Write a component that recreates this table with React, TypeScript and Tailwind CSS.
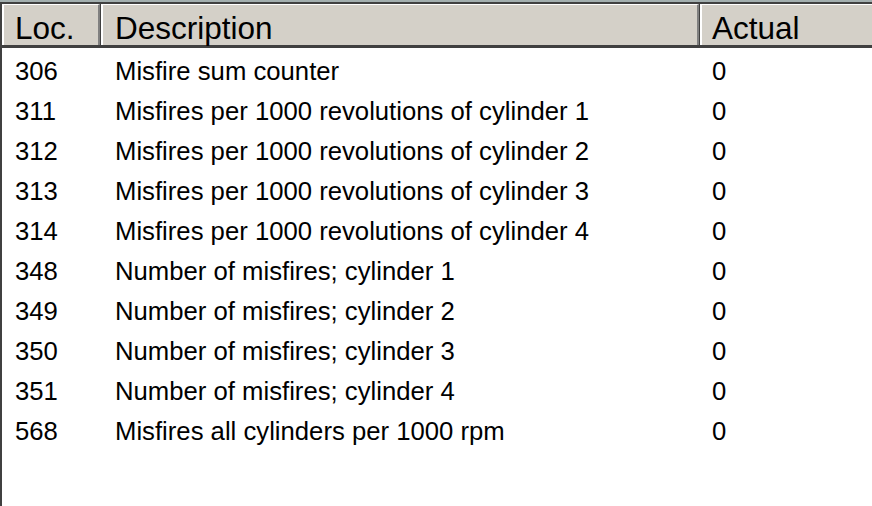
import React from 'react';

const rows = [
  { loc: '306', desc: 'Misfire sum counter', actual: '0' },
  { loc: '311', desc: 'Misfires per 1000 revolutions of cylinder 1', actual: '0' },
  { loc: '312', desc: 'Misfires per 1000 revolutions of cylinder 2', actual: '0' },
  { loc: '313', desc: 'Misfires per 1000 revolutions of cylinder 3', actual: '0' },
  { loc: '314', desc: 'Misfires per 1000 revolutions of cylinder 4', actual: '0' },
  { loc: '348', desc: 'Number of misfires; cylinder 1', actual: '0' },
  { loc: '349', desc: 'Number of misfires; cylinder 2', actual: '0' },
  { loc: '350', desc: 'Number of misfires; cylinder 3', actual: '0' },
  { loc: '351', desc: 'Number of misfires; cylinder 4', actual: '0' },
  { loc: '568', desc: 'Misfires all cylinders per 1000 rpm', actual: '0' },
];

const HeaderCell: React.FC<{ label: string; className: string; pad: string }> = ({ label, className, pad }) => (
  <div className={`${className} h-full border-r border-[#404040]`}>
    <div className={`h-full border-t border-l-2 border-r-2 border-t-white border-l-white border-r-[#808080] flex items-center ${pad}`}>
      {label}
    </div>
  </div>
);

export default function App() {
  return (
    <div className="w-[872px] h-[506px] overflow-hidden bg-[#a3afaf] pt-[2px]" style={{ fontFamily: '"Liberation Sans", Arial, sans-serif' }}>
      <div className="h-full bg-white border-t-2 border-l-2 border-[#404040]">
        {/* Header */}
        <div className="flex h-[44px] bg-[#d4d0c8] text-[31.5px] text-black border-b-[3px] border-b-[#404040] leading-none">
          <HeaderCell label="Loc." className="w-[99px] shrink-0" pad="pl-[11px] pt-[7px]" />
          <HeaderCell label="Description" className="w-[599px] shrink-0" pad="pl-[12px] pt-[7px]" />
          <div className="flex-1 h-full border-t border-l-2 border-t-white border-l-white flex items-center pl-[10px] pt-[7px]">
            Actual
          </div>
        </div>

        {/* Rows */}
        <div className="pt-[3px] text-[25.7px] text-black">
          {rows.map((r) => (
            <div key={r.loc} className="flex h-[40px] items-center">
              <div className="w-[99px] shrink-0 pl-[13px]">{r.loc}</div>
              <div className="w-[599px] shrink-0 pl-[14px]">{r.desc}</div>
              <div className="flex-1 pl-[12px]">{r.actual}</div>
            </div>
          ))}
        </div>
      </div>
    </div>
  );
}
